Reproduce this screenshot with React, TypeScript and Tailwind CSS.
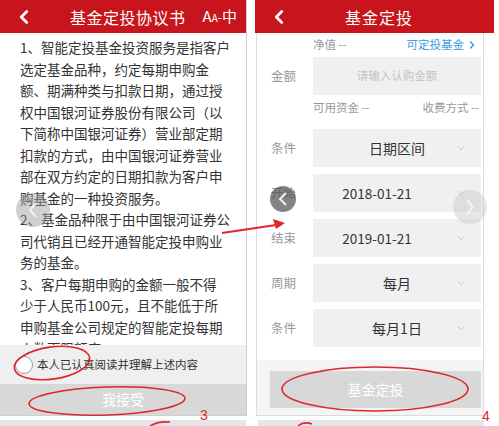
import { ChevronDown, ChevronLeft, ChevronRight } from "lucide-react";

const font = { fontFamily: '"Noto Sans CJK SC", "Noto Sans", sans-serif' };

const agreement = [
  "1、智能定投基金投资服务是指客户",
  "选定基金品种，约定每期申购金",
  "额、期满种类与扣款日期，通过授",
  "权中国银河证券股份有限公司（以",
  "下简称中国银河证券）营业部定期",
  "扣款的方式，由中国银河证券营业",
  "部在双方约定的日期扣款为客户申",
  "购基金的一种投资服务。",
  "2、基金品种限于由中国银河证券公",
  "司代销且已经开通智能定投申购业",
  "务的基金。",
  "3、客户每期申购的金额一般不得",
  "少于人民币100元，且不能低于所",
  "申购基金公司规定的智能定投每期",
  "人数下限额度",
];

const selects = [
  { label: "条件", value: "日期区间", date: false },
  { label: "开始", value: "2018-01-21", date: true },
  { label: "结束", value: "2019-01-21", date: true },
  { label: "周期", value: "每月", date: false },
  { label: "条件", value: "每月1日", date: false },
];

function AgreementPanel() {
  return (
    <div className="w-[247px] h-[416px] flex flex-col border-r border-b border-[#cfcfcf] bg-white">
      {/* Header */}
      <div className="h-[33px] shrink-0 bg-[#c8151d] flex items-center text-white">
        <ChevronLeft className="w-[22px] h-[22px] ml-[13px]" strokeWidth={3} />
        <span className="ml-[35px] text-[16px] tracking-[0.5px]">基金定投协议书</span>
        <span className="ml-[17px] flex items-baseline text-[15px]">
          A<span className="text-[10px]">A</span>
          <span className="text-[12px]">-</span>中
        </span>
      </div>

      {/* Agreement text */}
      <div className="h-[312px] shrink-0 overflow-hidden pl-[20px] pt-[4px] text-[13.5px] leading-[21.5px] text-[#333]">
        {agreement.map((line, i) => (
          <div key={i} className="whitespace-nowrap">
            {line}
          </div>
        ))}
      </div>

      {/* Confirm */}
      <div className="h-[39px] shrink-0 bg-[#efefef] flex items-center pl-[15px]">
        <span className="w-[18px] h-[18px] rounded-full border border-[#9a9a9a] bg-white" />
        <span className="ml-[4px] text-[11.5px] text-[#333]">本人已认真阅读并理解上述内容</span>
      </div>
      <div className="h-[31px] shrink-0 bg-[#d8d8d8] flex items-center justify-center text-[14px] text-white">
        我接受
      </div>
    </div>
  );
}

function PlanPanel() {
  return (
    <div className="w-[239px] h-[416px] flex flex-col">
      {/* Header */}
      <div className="h-[33px] shrink-0 bg-[#c8151d] flex items-center text-white">
        <ChevronLeft className="w-[22px] h-[22px] ml-[13px]" strokeWidth={3} />
        <span className="ml-[55px] text-[16px] tracking-[1px]">基金定投</span>
      </div>

      <div className="w-[228px] flex-1 ml-[1px] flex flex-col border-l border-r border-b border-[#dcdcdc] bg-white">
        <div className="h-[24px] flex items-center justify-between pl-[56px] pr-[5px] text-[11.5px]">
          <span className="text-[#999]">净值 --</span>
          <span className="flex items-center text-[#3b9de4]">
            可定投基金
            <ChevronRight className="w-[12px] h-[12px] ml-[2px]" strokeWidth={3} />
          </span>
        </div>

        <div className="h-[38px] flex items-center">
          <span className="w-[56px] pl-[14px] text-[12.5px] text-[#999]">金额</span>
          <div className="w-[168px] h-full bg-[#f0f0f0] flex items-center justify-center text-[11.5px] text-[#c4c4c4]">
            请输入认购金额
          </div>
        </div>

        <div className="h-[26px] flex items-center justify-between pl-[56px] pr-[4px] text-[11.5px] text-[#999]">
          <span>可用资金 --</span>
          <span>收费方式 --</span>
        </div>

        <div className="mt-[8px] flex flex-col gap-[7px]">
          {selects.map((s, i) => (
            <div key={i} className="h-[38px] flex items-center">
              <span className="w-[56px] pl-[14px] text-[12.5px] text-[#999]">{s.label}</span>
              <div
                className={`w-[168px] h-full bg-[#f0f0f0] relative flex items-center justify-center text-[#333] ${
                  s.date ? "pr-[40px] text-[13.5px]" : "text-[14px]"
                }`}
              >
                {s.value}
                <ChevronDown className="absolute right-[13px] w-[14px] h-[14px] text-[#c2c2c2]" strokeWidth={1.5} />
              </div>
            </div>
          ))}
        </div>

        <div className="mt-[13px] flex-1 bg-[#f5f5f5] pt-[11px]">
          <div className="ml-[13px] w-[211px] h-[37px] bg-[#d8d8d8] flex items-center justify-center text-[14px] text-white">
            基金定投
          </div>
        </div>
      </div>
    </div>
  );
}

function Annotations() {
  return (
    <svg className="absolute inset-0 pointer-events-none" width="499" height="426" viewBox="0 0 499 426">
      {/* carousel arrows */}
      <circle cx="33" cy="210" r="17" fill="rgba(150,150,150,0.45)" />
      <path d="M36 203 L30 210 L36 217" stroke="rgba(255,255,255,0.7)" strokeWidth="2" fill="none" />
      <circle cx="283" cy="199" r="13" fill="rgba(80,80,80,0.7)" />
      <path d="M286 193 L280 199 L286 205" stroke="rgba(255,255,255,0.85)" strokeWidth="2" fill="none" />
      <circle cx="470" cy="207" r="17" fill="rgba(200,200,200,0.45)" />
      <path d="M467 200 L473 207 L467 214" stroke="rgba(255,255,255,0.7)" strokeWidth="2" fill="none" />

      {/* red marks */}
      <g stroke="#e0262b" fill="none" strokeWidth="1.6">
        <ellipse cx="52" cy="363" rx="38" ry="16" transform="rotate(-8 52 363)" />
        <ellipse cx="107" cy="401" rx="78" ry="14" transform="rotate(-2 107 401)" />
        <ellipse cx="375" cy="389" rx="93" ry="22" />
        <path d="M150 426 Q158 421 170 422" />
        <path d="M298 426 Q304 421 312 424" />
        <line x1="222" y1="233" x2="276" y2="225" strokeWidth="1.8" />
      </g>
      <path d="M285 223 L273 219 L276 229 Z" fill="#e0262b" />
      <text x="200" y="420" fill="#e0262b" fontSize="14" fontFamily="Liberation Sans, sans-serif">3</text>
      <text x="482" y="421" fill="#e0262b" fontSize="14" fontFamily="Liberation Sans, sans-serif">4</text>
    </svg>
  );
}

export default function App() {
  return (
    <div className="relative w-[499px] h-[426px] overflow-hidden bg-white" style={font}>
      <div className="flex">
        <AgreementPanel />
        <div className="w-[8px]" />
        <PlanPanel />
      </div>
      <div className="flex mt-[4px] h-[6px]">
        <div className="w-[246px] bg-[#e6e6e6]" />
        <div className="w-[12px]" />
        <div className="w-[226px] bg-[#e6e6e6]" />
      </div>
      <Annotations />
    </div>
  );
}
